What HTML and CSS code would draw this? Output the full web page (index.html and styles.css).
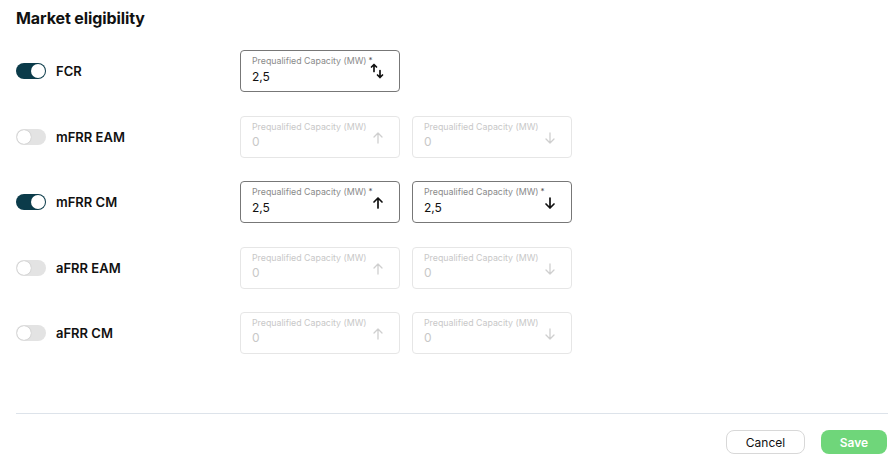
FILE: index.html
```html
<!DOCTYPE html>
<html lang="en">
<head>
  <meta charset="UTF-8" />
  <title>Market eligibility</title>
  <link rel="stylesheet" href="styles.css">
</head>
<body>
  <main class="panel">
    <h2>Market eligibility</h2>
    <div class="rows">
      <div class="row">
        <div class="market"><span class="toggle on"></span><span class="name">FCR</span></div>
        <div class="field">
          <span class="label">Prequalified Capacity (MW)<sup>*</sup></span>
          <span class="value">2,5</span>
          <svg class="icon swap" viewBox="0 0 14 16"><path d="M4 8.5V1.5M1.5 4L4 1.5L6.5 4M10 7.5v7M7.5 12L10 14.5L12.5 12" /></svg>
        </div>
      </div>
      <div class="row">
        <div class="market"><span class="toggle"></span><span class="name">mFRR EAM</span></div>
        <div class="field off">
          <span class="label">Prequalified Capacity (MW)</span>
          <span class="value">0</span>
          <svg class="icon" viewBox="0 0 14 14"><path d="M7 12V2M3 6L7 2L11 6" /></svg>
        </div>
        <div class="field off">
          <span class="label">Prequalified Capacity (MW)</span>
          <span class="value">0</span>
          <svg class="icon" viewBox="0 0 14 14"><path d="M7 2v10M3 8L7 12L11 8" /></svg>
        </div>
      </div>
      <div class="row">
        <div class="market"><span class="toggle on"></span><span class="name">mFRR CM</span></div>
        <div class="field">
          <span class="label">Prequalified Capacity (MW)<sup>*</sup></span>
          <span class="value">2,5</span>
          <svg class="icon" viewBox="0 0 14 14"><path d="M7 12V2M3 6L7 2L11 6" /></svg>
        </div>
        <div class="field">
          <span class="label">Prequalified Capacity (MW)<sup>*</sup></span>
          <span class="value">2,5</span>
          <svg class="icon" viewBox="0 0 14 14"><path d="M7 2v10M3 8L7 12L11 8" /></svg>
        </div>
      </div>
      <div class="row">
        <div class="market"><span class="toggle"></span><span class="name">aFRR EAM</span></div>
        <div class="field off">
          <span class="label">Prequalified Capacity (MW)</span>
          <span class="value">0</span>
          <svg class="icon" viewBox="0 0 14 14"><path d="M7 12V2M3 6L7 2L11 6" /></svg>
        </div>
        <div class="field off">
          <span class="label">Prequalified Capacity (MW)</span>
          <span class="value">0</span>
          <svg class="icon" viewBox="0 0 14 14"><path d="M7 2v10M3 8L7 12L11 8" /></svg>
        </div>
      </div>
      <div class="row">
        <div class="market"><span class="toggle"></span><span class="name">aFRR CM</span></div>
        <div class="field off">
          <span class="label">Prequalified Capacity (MW)</span>
          <span class="value">0</span>
          <svg class="icon" viewBox="0 0 14 14"><path d="M7 12V2M3 6L7 2L11 6" /></svg>
        </div>
        <div class="field off">
          <span class="label">Prequalified Capacity (MW)</span>
          <span class="value">0</span>
          <svg class="icon" viewBox="0 0 14 14"><path d="M7 2v10M3 8L7 12L11 8" /></svg>
        </div>
      </div>
    </div>
    <footer class="actions">
      <button class="btn cancel">Cancel</button>
      <button class="btn save">Save</button>
    </footer>
  </main>
</body>
</html>
```
FILE: styles.css
```css
body { margin: 0; font-family: Inter, "Liberation Sans", sans-serif; background: #fff; color: #111; }
.panel { padding: 0 0 0 16px; }
h2 { margin: 0; padding-top: 8px; font-size: 16px; line-height: 20px; font-weight: 700; color: #111; letter-spacing: -0.1px; }
.rows { display: flex; flex-direction: column; gap: 23.5px; margin-top: 22px; }
.row { display: flex; align-items: center; gap: 12px; height: 42px; }
.market { width: 212px; display: flex; align-items: center; gap: 10px; }
.name { font-size: 13px; font-weight: 600; color: #111; }
/* toggle switch */
.toggle { position: relative; width: 30px; height: 16px; border-radius: 8px; background: #e3e3e3; display: inline-block; }
.toggle::after { content: ""; position: absolute; top: 1px; left: 1px; width: 14px; height: 14px; border-radius: 50%; background: #fff; box-shadow: 0 0 1px rgba(0,0,0,0.35); }
.toggle.on { background: #0b3b4a; }
.toggle.on::after { left: 15px; box-shadow: none; }
/* capacity fields */
.field { position: relative; box-sizing: border-box; width: 160px; height: 42px; border: 1px solid #777; border-radius: 4px; padding: 4px 11px 0; display: flex; flex-direction: column; }
.label { font-size: 8.8px; line-height: 11px; color: #8a8a8a; white-space: nowrap; }
.label sup { font-size: 8px; vertical-align: 0; position: relative; top: -1px; margin-left: 2px; color: #555; }
.value { font-size: 12px; line-height: 16px; margin-top: 2px; color: #111; }
.icon { position: absolute; right: 14px; top: 14px; width: 14px; height: 14px; fill: none; stroke: #111; stroke-width: 1.7; stroke-linecap: round; stroke-linejoin: round; }
.icon.swap { top: 12px; height: 16px; right: 15px; }
.field.off { border-color: #e6e6e6; }
.field.off .label { color: #c8c8c8; }
.field.off .value { color: #c8c8c8; }
.field.off .icon { stroke: #cfcfcf; stroke-width: 1.3; }
/* footer buttons */
.actions { margin-top: 59px; border-top: 1px solid #dde3ea; display: flex; justify-content: flex-end; gap: 16px; padding: 16px 1px 0 0; }
.btn { font-family: inherit; font-size: 12px; height: 24px; border-radius: 8px; cursor: pointer; }
.cancel { width: 79px; background: #fff; border: 1px solid #d8d8d8; color: #111; }
.save { width: 66px; background: #6fd67a; border: none; color: #fff; font-weight: 600; }
```
